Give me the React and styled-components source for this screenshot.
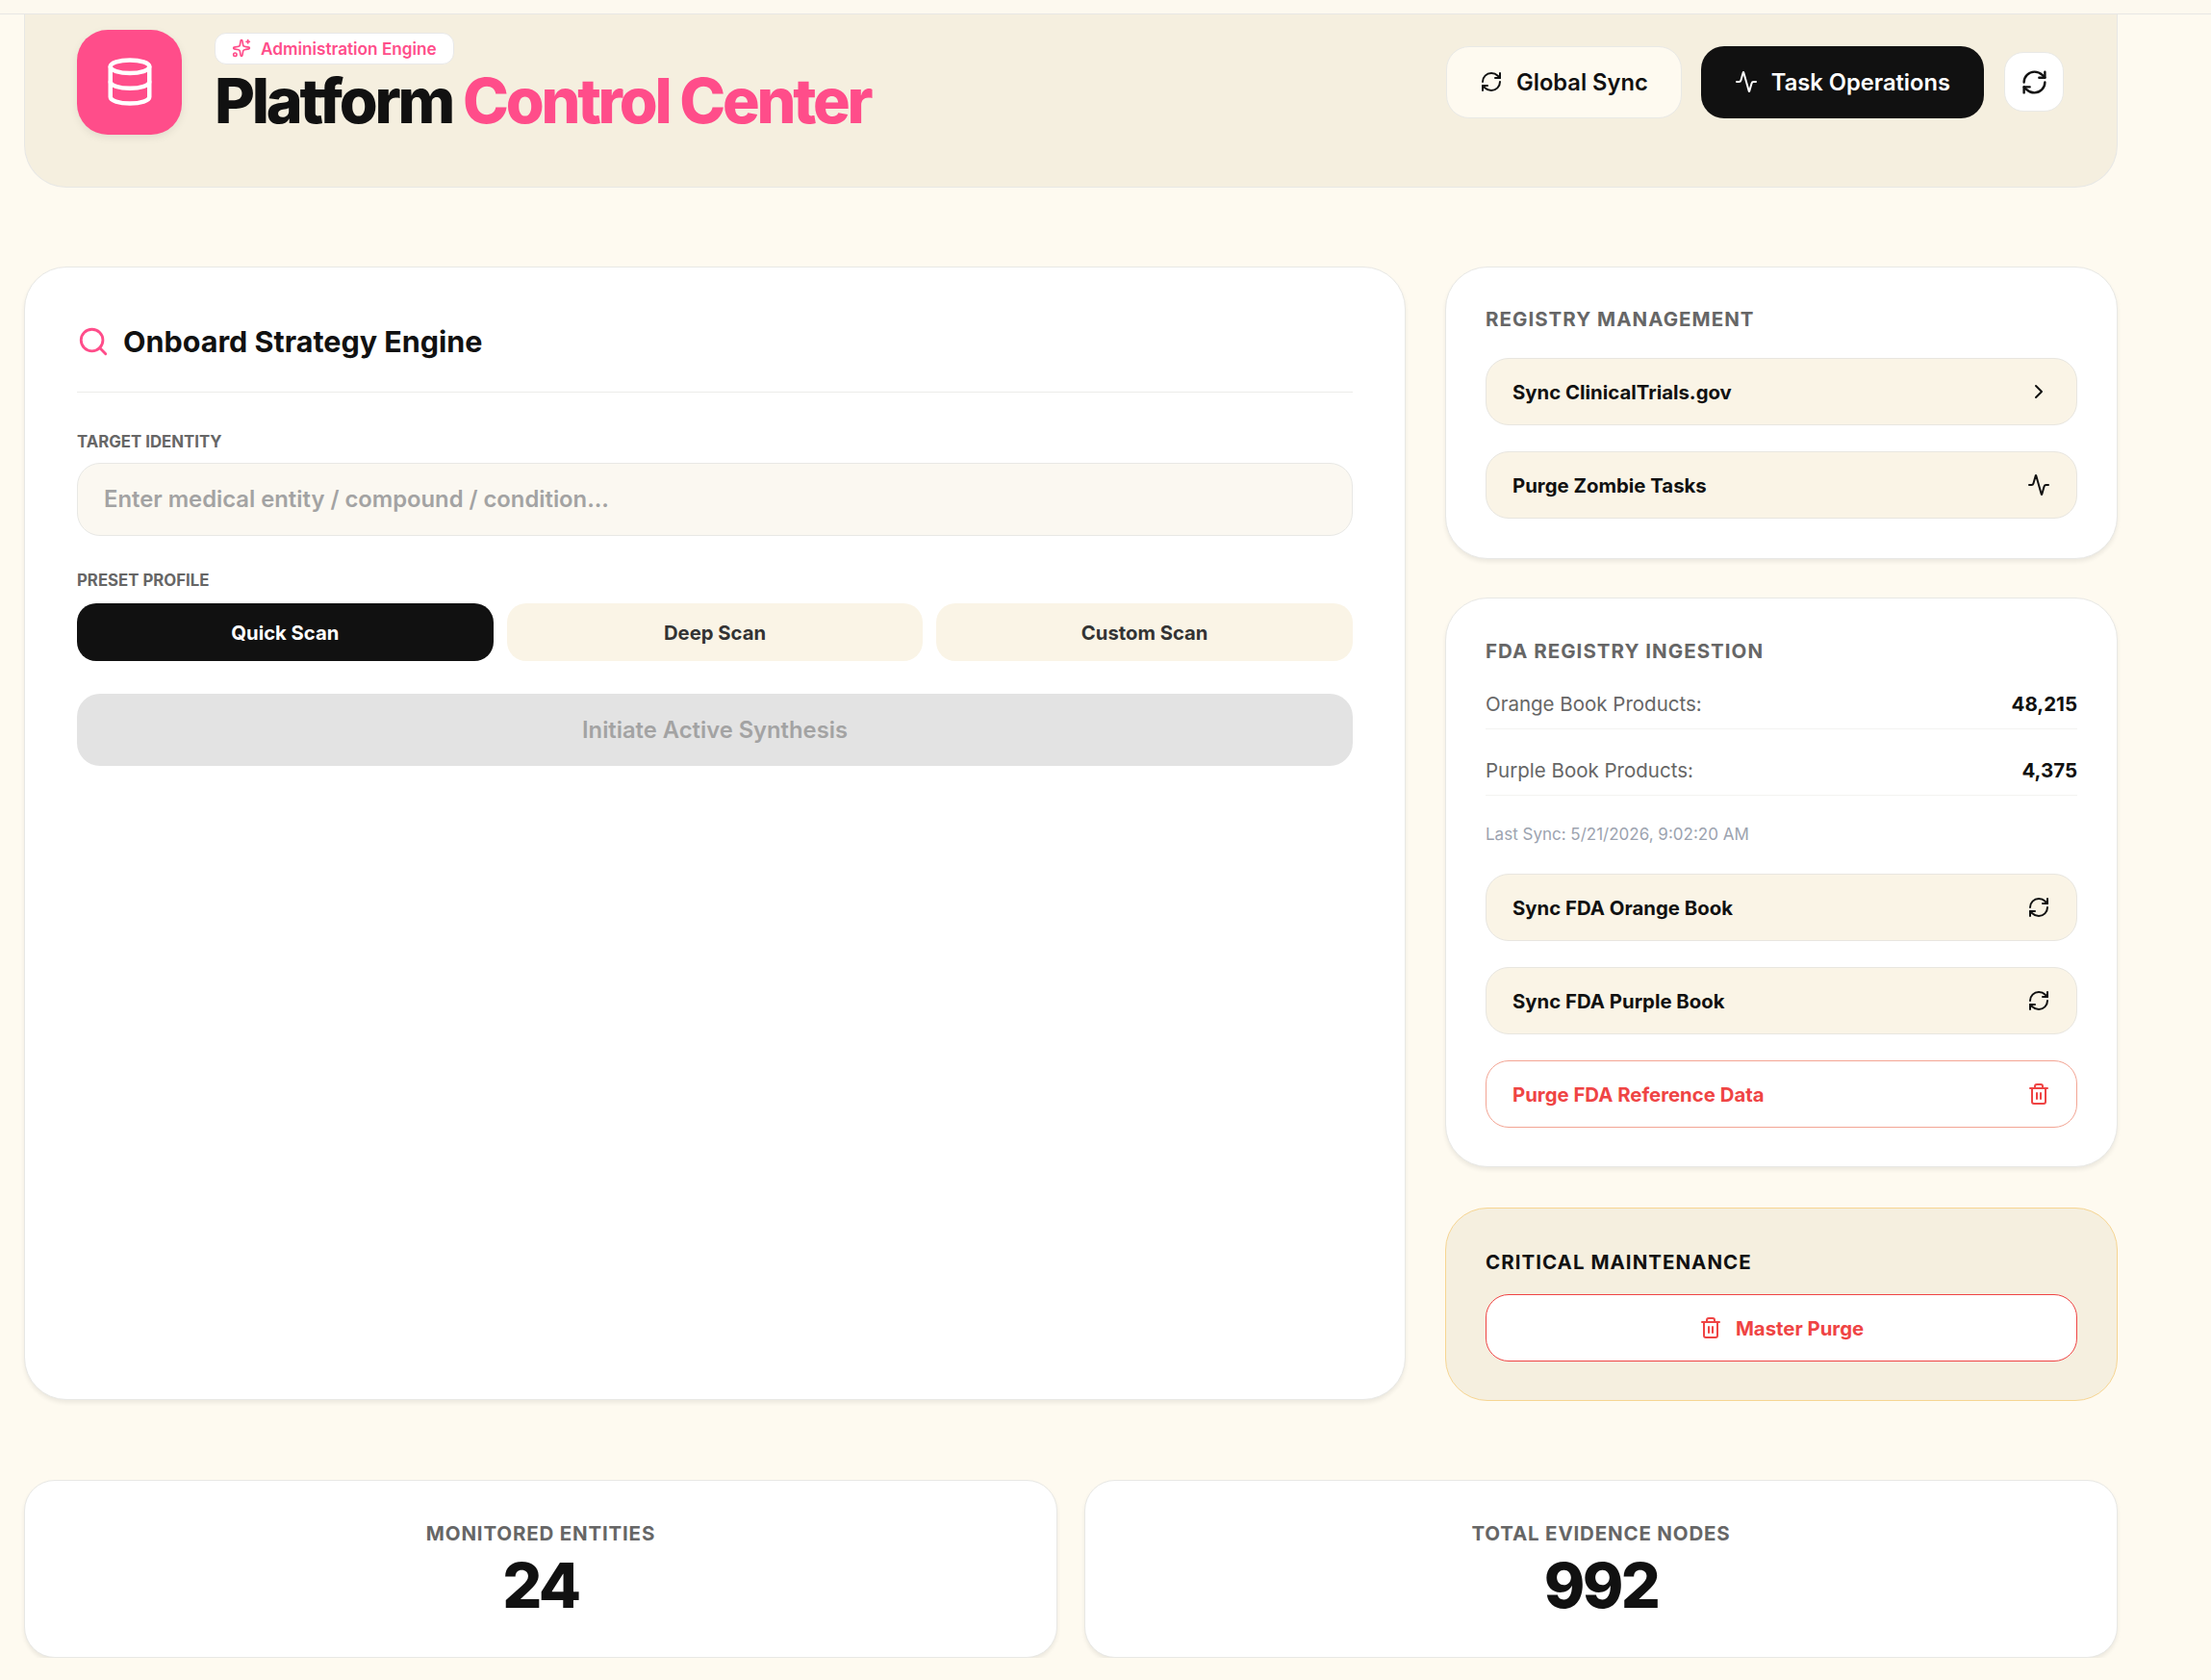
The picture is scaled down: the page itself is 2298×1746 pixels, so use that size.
import React from 'react';
import styled, { createGlobalStyle } from 'styled-components';
import { Database, Sparkles, RefreshCw, Activity, Search, ChevronRight, Trash2 } from 'lucide-react';

const Global = createGlobalStyle`
  html, body { margin: 0; padding: 0; background: #fefaf0; }
  * { box-sizing: border-box; }
  body { font-family: Inter, "Liberation Sans", sans-serif; color: #111111; }
  input::placeholder { color: #a3a3a3; opacity: 1; }
`;

const TopStrip = styled.div`
  height: 15px;
  background: #fdf9ef;
  border-bottom: 1.5px solid #e7e7e5;
`;
const Page = styled.main`
  width: 2201px;
  padding-left: 25px;
  display: flex;
  flex-direction: column;
  gap: 82px;
`;
const Header = styled.header`
  height: 180px;
  padding: 16px 55px 55px 54px;
  background: #f5efdf;
  border: 1.5px solid #e7e7e5;
  border-top: 0;
  border-radius: 0 0 44px 44px;
  display: flex;
  align-items: center;
  justify-content: space-between;
`;
const Brand = styled.div`
  display: flex;
  align-items: flex-start;
  gap: 34px;
`;
const LogoTile = styled.div`
  width: 109px;
  height: 109px;
  border-radius: 32px;
  background: #ff4d8a;
  color: #fff;
  display: flex;
  align-items: center;
  justify-content: center;
  box-shadow: 0 3px 8px rgba(0, 0, 0, 0.08);
`;
const BrandText = styled.div`
  padding-top: 3px;
  display: flex;
  flex-direction: column;
  align-items: flex-start;
`;
const Badge = styled.span`
  height: 33px;
  padding: 0 17px;
  display: inline-flex;
  align-items: center;
  gap: 10px;
  background: #fff;
  border: 1.5px solid #e8e8e8;
  border-radius: 12px;
  color: #ff4d8a;
  font-size: 17.2px;
  font-weight: 600;
`;
const Title = styled.h1`
  margin: 4px 0 0;
  font-size: 64.5px;
  line-height: 69px;
  font-weight: 800;
  letter-spacing: -0.05em;
  color: #111;
`;
const Accent = styled.span`
  color: #ff4d8a;
`;
const Actions = styled.div`
  display: flex;
  align-items: center;
  gap: 21px;
`;
const ActionGroup = styled.div`
  display: flex;
  align-items: center;
  gap: 20px;
`;
const ActionButton = styled.button`
  height: 75px;
  padding: 0 ${(p) => (p.$dark ? '35px' : '34px')};
  display: inline-flex;
  align-items: center;
  gap: 14px;
  border-radius: 24px;
  border: ${(p) => (p.$dark ? '0' : '1.5px solid #e9e9e6')};
  background: ${(p) => (p.$dark ? '#111111' : '#fefaf0')};
  color: ${(p) => (p.$dark ? '#fff' : '#111')};
  font: 600 23.7px Inter, sans-serif;
`;
const IconButton = styled.button`
  width: 62px;
  height: 62px;
  border-radius: 20px;
  border: 1.5px solid #e9e9e6;
  background: #fff;
  color: #111;
  display: flex;
  align-items: center;
  justify-content: center;
  padding: 0;
`;
const MainGrid = styled.section`
  display: grid;
  grid-template-columns: 1436px 699px;
  gap: 41px;
`;
const Card = styled.div`
  background: #fff;
  border: 1.5px solid #e8e8e5;
  border-radius: 44px;
  box-shadow: 0 3px 4px rgba(0, 0, 0, 0.07);
`;
const StrategyCard = styled(Card)`
  height: 1178px;
  padding: 54px 54px 0;
`;
const CardHeading = styled.div`
  height: 76px;
  padding-bottom: 30px;
  display: flex;
  align-items: center;
  gap: 14px;
  border-bottom: 1.5px solid #ececea;
  color: #ff4d8a;
  font-size: 30.5px;
  font-weight: 700;
`;
const HeadingText = styled.h2`
  margin: 0;
  font: inherit;
  color: #111;
`;
const FieldLabel = styled.label`
  display: block;
  font-size: 16.8px;
  line-height: 20px;
  font-weight: 700;
  color: #666666;
  margin: ${(p) => p.$top}px 0 ${(p) => p.$bottom}px;
`;
const TextInput = styled.input`
  display: block;
  width: 100%;
  height: 76px;
  padding: 0 27px 1px;
  background: #fbf8f1;
  border: 1.5px solid #e8e8e5;
  border-radius: 24px;
  font: 600 23.8px Inter, sans-serif;
  color: #111;
  outline: none;
`;
const PresetRow = styled.div`
  display: grid;
  grid-template-columns: repeat(3, 1fr);
  gap: 14px;
`;
const PresetButton = styled.button`
  height: 60px;
  border: 0;
  border-radius: 20px;
  background: ${(p) => (p.$active ? '#111111' : '#faf4e6')};
  color: ${(p) => (p.$active ? '#fff' : '#333')};
  font: 700 20.25px Inter, sans-serif;
`;
const SubmitButton = styled.button`
  display: block;
  width: 100%;
  height: 75px;
  margin-top: 34px;
  border: 0;
  border-radius: 24px;
  background: #e3e3e3;
  color: #a3a3a3;
  font: 600 23.75px Inter, sans-serif;
`;
const SideColumn = styled.aside`
  display: flex;
  flex-direction: column;
  gap: 40px;
`;
const RegistryCard = styled(Card)`
  padding: 40px 41px 41px;
`;
const IngestionCard = styled(Card)`
  padding: 41px 41px 40px;
`;
const CriticalCard = styled.div`
  height: 201px;
  margin-top: 2px;
  padding: 42px 41px 0;
  background: #f5efdf;
  border: 1.5px solid #f6d592;
  border-radius: 44px;
`;
const SectionTitle = styled.h3`
  margin: 0 0 ${(p) => p.$gap}px;
  font-size: 20.5px;
  line-height: 28px;
  font-weight: 700;
  letter-spacing: 0.05em;
  color: ${(p) => (p.$dark ? '#111' : '#666')};
  text-transform: uppercase;
`;
const Stack = styled.div`
  display: flex;
  flex-direction: column;
  gap: 27px;
`;
const RowButton = styled.button`
  width: 100%;
  height: 70px;
  padding: ${(p) => (p.$center ? '0' : '0 27px')};
  display: flex;
  align-items: center;
  justify-content: ${(p) => (p.$center ? 'center' : 'space-between')};
  gap: ${(p) => (p.$center ? '14px' : '0')};
  border-radius: 24px;
  border: 1.5px solid ${(p) => (p.$tone === 'danger' ? '#f3a594' : p.$tone === 'strong' ? '#ef4444' : '#e8e6e0')};
  background: ${(p) => (p.$tone ? '#fff' : '#faf4e6')};
  color: ${(p) => (p.$tone ? '#ef4444' : '#111')};
  font: 700 20.35px Inter, sans-serif;
`;
const Metric = styled.div`
  height: 52px;
  margin-bottom: 17px;
  display: flex;
  align-items: center;
  justify-content: space-between;
  border-bottom: 1.5px solid #f3f3f1;
  font-size: 20.5px;
  color: #666;
`;
const MetricValue = styled.span`
  font-weight: 700;
  color: #111;
`;
const SyncNote = styled.div`
  font-size: 17px;
  line-height: 24px;
  color: #9ca3af;
  margin: 28px 0 29px;
`;
const StatsRow = styled.section`
  display: grid;
  grid-template-columns: 1fr 1fr;
  gap: 28px;
`;
const StatCard = styled(Card)`
  height: 185px;
  padding-top: 41px;
  border-radius: 32px;
  text-align: center;
`;
const StatLabel = styled.div`
  font-size: 20.5px;
  line-height: 28px;
  font-weight: 700;
  letter-spacing: 0.04em;
  color: #666;
`;
const StatValue = styled.div`
  margin-top: 2px;
  font-size: 64.5px;
  line-height: 76px;
  font-weight: 800;
  letter-spacing: -0.04em;
  color: #111;
`;

const rowIcon = { size: 24, strokeWidth: 2 };

export default function App() {
  return (
    <>
      <Global />
      <TopStrip />
      <Page>
        <Header>
          <Brand>
            <LogoTile>
              <Database size={54} strokeWidth={2} />
            </LogoTile>
            <BrandText>
              <Badge>
                <Sparkles size={20} strokeWidth={2} />
                Administration Engine
              </Badge>
              <Title>
                Platform <Accent>Control Center</Accent>
              </Title>
            </BrandText>
          </Brand>
          <Actions>
            <ActionGroup>
              <ActionButton>
                <RefreshCw size={24} strokeWidth={2} />
                Global Sync
              </ActionButton>
              <ActionButton $dark>
                <Activity size={24} strokeWidth={2} />
                Task Operations
              </ActionButton>
            </ActionGroup>
            <IconButton aria-label="Refresh">
              <RefreshCw size={29} strokeWidth={2} />
            </IconButton>
          </Actions>
        </Header>

        <MainGrid>
          <StrategyCard>
            <CardHeading>
              <Search size={34} strokeWidth={2} />
              <HeadingText>Onboard Strategy Engine</HeadingText>
            </CardHeading>
            <FieldLabel $top={41} $bottom={12}>TARGET IDENTITY</FieldLabel>
            <TextInput placeholder="Enter medical entity / compound / condition..." />
            <FieldLabel $top={36} $bottom={14}>PRESET PROFILE</FieldLabel>
            <PresetRow>
              <PresetButton $active>Quick Scan</PresetButton>
              <PresetButton>Deep Scan</PresetButton>
              <PresetButton>Custom Scan</PresetButton>
            </PresetRow>
            <SubmitButton>Initiate Active Synthesis</SubmitButton>
          </StrategyCard>

          <SideColumn>
            <RegistryCard>
              <SectionTitle $gap={26}>Registry Management</SectionTitle>
              <Stack>
                <RowButton>
                  Sync ClinicalTrials.gov
                  <ChevronRight {...rowIcon} />
                </RowButton>
                <RowButton>
                  Purge Zombie Tasks
                  <Activity {...rowIcon} />
                </RowButton>
              </Stack>
            </RegistryCard>

            <IngestionCard>
              <SectionTitle $gap={15}>FDA Registry Ingestion</SectionTitle>
              <Metric>
                Orange Book Products:
                <MetricValue>48,215</MetricValue>
              </Metric>
              <Metric>
                Purple Book Products:
                <MetricValue>4,375</MetricValue>
              </Metric>
              <SyncNote>Last Sync: 5/21/2026, 9:02:20 AM</SyncNote>
              <Stack>
                <RowButton>
                  Sync FDA Orange Book
                  <RefreshCw {...rowIcon} />
                </RowButton>
                <RowButton>
                  Sync FDA Purple Book
                  <RefreshCw {...rowIcon} />
                </RowButton>
                <RowButton $tone="danger">
                  Purge FDA Reference Data
                  <Trash2 {...rowIcon} />
                </RowButton>
              </Stack>
            </IngestionCard>

            <CriticalCard>
              <SectionTitle $dark $gap={19}>Critical Maintenance</SectionTitle>
              <RowButton $tone="strong" $center>
                <Trash2 {...rowIcon} />
                Master Purge
              </RowButton>
            </CriticalCard>
          </SideColumn>
        </MainGrid>

        <StatsRow>
          <StatCard>
            <StatLabel>MONITORED ENTITIES</StatLabel>
            <StatValue>24</StatValue>
          </StatCard>
          <StatCard>
            <StatLabel>TOTAL EVIDENCE NODES</StatLabel>
            <StatValue>992</StatValue>
          </StatCard>
        </StatsRow>
      </Page>
    </>
  );
}
